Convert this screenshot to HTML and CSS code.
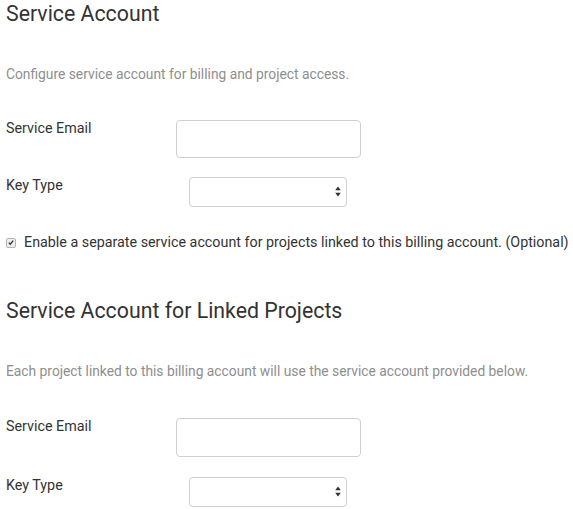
FILE: index.html
```html
<!DOCTYPE html>
<html>
<head>
<meta charset="utf-8">
<link rel="stylesheet" href="styles.css">
</head>
<body>
<div class="page">
  <section class="section">
    <h2 class="title">Service Account</h2>
    <p class="desc">Configure service account for billing and project access.</p>
    <div class="form">
      <div class="row">
        <label class="label">Service Email</label>
        <input class="text-input" type="text">
      </div>
      <div class="row">
        <label class="label">Key Type</label>
        <div class="select-wrap">
          <select class="select"><option></option></select>
          <svg class="select-arrows" width="6" height="11" viewBox="0 0 6 11"><path d="M3 0.5 L5.8 4.2 H0.2 Z M3 10.5 L5.8 6.8 H0.2 Z" fill="#333"/></svg>
        </div>
      </div>
    </div>
    <div class="check-row">
      <span class="checkbox"><svg width="9" height="9" viewBox="0 0 9 9"><path d="M2 4.6 L3.7 6.4 L7 2.4" fill="none" stroke="#333" stroke-width="1.5"/></svg></span>
      <span class="check-label">Enable a separate service account for projects linked to this billing account. (Optional)</span>
    </div>
  </section>
  <section class="section second">
    <h2 class="title">Service Account for Linked Projects</h2>
    <p class="desc">Each project linked to this billing account will use the service account provided below.</p>
    <div class="form">
      <div class="row">
        <label class="label">Service Email</label>
        <input class="text-input" type="text">
      </div>
      <div class="row">
        <label class="label">Key Type</label>
        <div class="select-wrap">
          <select class="select"><option></option></select>
          <svg class="select-arrows" width="6" height="11" viewBox="0 0 6 11"><path d="M3 0.5 L5.8 4.2 H0.2 Z M3 10.5 L5.8 6.8 H0.2 Z" fill="#333"/></svg>
        </div>
      </div>
    </div>
  </section>
</div>
</body>
</html>
```
FILE: styles.css
```css
html, body {
  margin: 0;
  padding: 0;
  background: #fff;
}
body {
  font-family: Roboto, "Liberation Sans", sans-serif;
  color: #333;
}
.page {
  padding: 0 0 0 6px;
}
.title {
  margin: 0;
  font-size: 21.3px;
  font-weight: 400;
  line-height: 28px;
  color: #333;
}
.desc {
  margin: 37px 0 0;
  font-size: 13.8px;
  line-height: 18px;
  color: #8e8e8e;
}
.form {
  margin-top: 37px;
  display: flex;
  flex-direction: column;
  gap: 19px;
}
.second .form {
  margin-top: 38px;
  gap: 20px;
}
.second .text-input {
  height: 39px;
}
.row {
  display: flex;
  align-items: flex-start;
}
.label {
  width: 170px;
  font-size: 14.3px;
  line-height: 17px;
  color: #333;
}
.text-input {
  box-sizing: border-box;
  width: 185px;
  height: 38px;
  margin: 0;
  border: 1px solid #cfcfcf;
  border-radius: 4px;
  background: #fff;
  outline: none;
}
.select-wrap {
  position: relative;
  margin-left: 13px;
}
.select {
  box-sizing: border-box;
  display: block;
  width: 158px;
  height: 30px;
  margin: 0;
  border: 1px solid #cfcfcf;
  border-radius: 4px;
  background: #fff;
  -webkit-appearance: none;
  appearance: none;
  outline: none;
}
.select-arrows {
  position: absolute;
  right: 6px;
  top: 9px;
}
.check-row {
  margin-top: 27px;
  display: flex;
  align-items: center;
  gap: 8px;
}
.checkbox {
  box-sizing: border-box;
  width: 10px;
  height: 10px;
  border: 1px solid #b5b5b5;
  border-radius: 2px;
  background: #eee;
  display: flex;
  align-items: center;
  justify-content: center;
}
.checkbox svg {
  display: block;
}
.check-label {
  font-size: 14.3px;
  line-height: 17px;
  color: #333;
}
.second {
  margin-top: 46px;
}
```
